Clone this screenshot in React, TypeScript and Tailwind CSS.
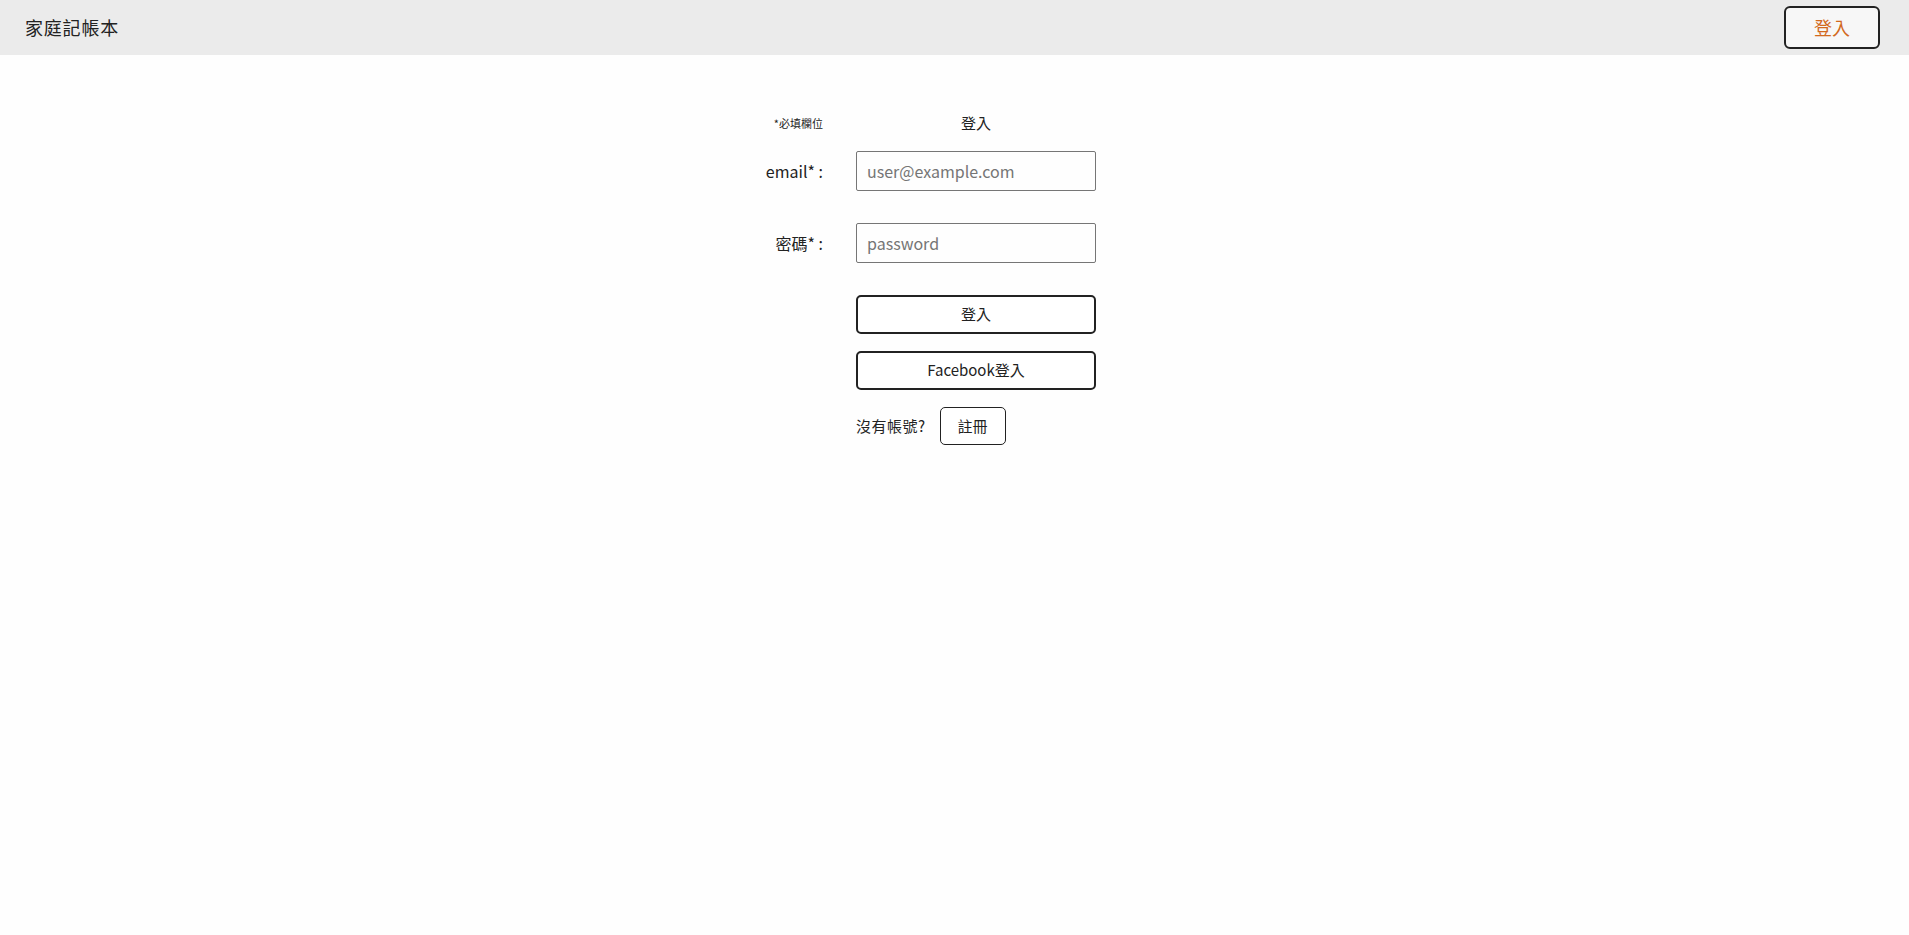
import React from "react";

const font = { fontFamily: '"Noto Sans CJK TC", "Noto Sans", sans-serif' };

function Header() {
  return (
    <header className="flex h-[55px] items-center justify-between bg-[#ebebeb] pl-[25px] pr-[29px]">
      <h1 className="text-[18px] font-normal tracking-[0.8px] text-[#222]">家庭記帳本</h1>
      <button className="grid h-[43px] w-[96px] place-items-center rounded-[6px] border-2 border-[#222] bg-[#f7f7f7] text-[18px] text-[#d2691e]">
        登入
      </button>
    </header>
  );
}

function LoginForm() {
  return (
    <div className="flex justify-center pt-[52px]">
      <div className="grid grid-cols-[60px_240px] gap-x-[33px] pr-[50px] text-[#222]">
        <div className="flex h-[32px] items-center justify-end text-[11px]">*必填欄位</div>
        <div className="flex h-[32px] items-center justify-center text-[15px]">登入</div>

        <label className="mt-[12px] flex h-[40px] items-center justify-end whitespace-nowrap text-[16px]">email* :</label>
        <input
          type="email"
          placeholder="user@example.com"
          className="mt-[12px] h-[40px] w-[240px] rounded-[2px] border border-[#767676] px-[10px] text-[16px] outline-none placeholder:text-[#757575]"
        />

        <label className="mt-[32px] flex h-[40px] items-center justify-end whitespace-nowrap text-[16px]">密碼* :</label>
        <input
          type="password"
          placeholder="password"
          className="mt-[32px] h-[40px] w-[240px] rounded-[2px] border border-[#767676] px-[10px] text-[16px] outline-none placeholder:text-[#757575]"
        />

        <div />
        <div className="mt-[32px] flex flex-col gap-[17px]">
          <button className="h-[39px] w-[240px] rounded-[5px] border-2 border-[#222] bg-white text-[15px]">登入</button>
          <button className="h-[39px] w-[240px] rounded-[5px] border-2 border-[#222] bg-white text-[15px]">Facebook登入</button>
          <div className="flex items-center gap-[14px]">
            <span className="text-[15px] tracking-[0.5px]">沒有帳號?</span>
            <button className="h-[38px] w-[66px] rounded-[5px] border border-[#222] bg-white text-[15px]">註冊</button>
          </div>
        </div>
      </div>
    </div>
  );
}

export default function App() {
  return (
    <div className="min-h-[935px] bg-[#fefefe]" style={font}>
      <Header />
      <LoginForm />
    </div>
  );
}
